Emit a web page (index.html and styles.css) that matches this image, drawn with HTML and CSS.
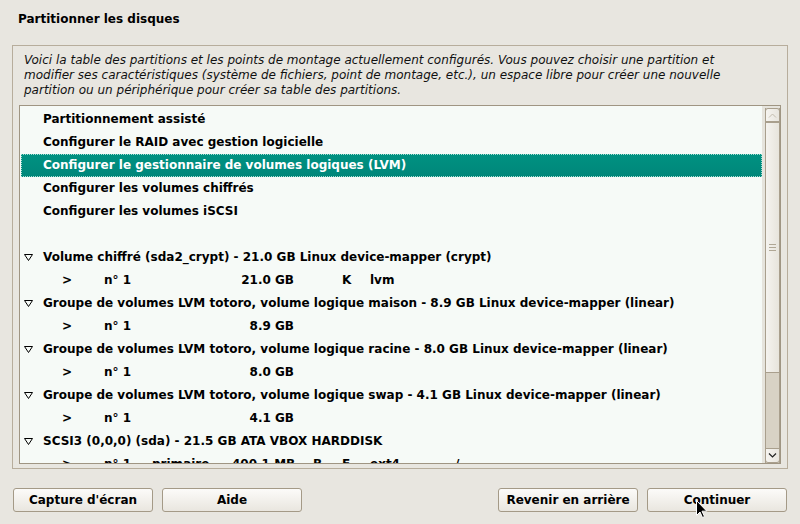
FILE: index.html
```html
<!DOCTYPE html>
<html lang="fr">
<head>
<meta charset="utf-8">
<title>Partitionner les disques</title>
<link rel="stylesheet" href="styles.css">
</head>
<body>
<h1 class="title">Partitionner les disques</h1>
<div class="frame">
  <p class="desc">Voici la table des partitions et les points de montage actuellement configurés. Vous pouvez choisir une partition et modifier ses caractéristiques (système de fichiers, point de montage, etc.), un espace libre pour créer une nouvelle partition ou un périphérique pour créer sa table des partitions.</p>
  <div class="listbox">
    <div class="rows">
      <div class="row"><span class="tw"></span>Partitionnement assisté</div>
      <div class="row"><span class="tw"></span>Configurer le RAID avec gestion logicielle</div>
      <div class="row selected"><span class="tw"></span>Configurer le gestionnaire de volumes logiques (LVM)</div>
      <div class="row"><span class="tw"></span>Configurer les volumes chiffrés</div>
      <div class="row"><span class="tw"></span>Configurer les volumes iSCSI</div>
      <div class="row"></div>
      <div class="row"><span class="tw"><svg class="tri" width="9" height="7" viewBox="0 0 9 7"><path d="M0.5 0.5 H8.5 L4.5 6.5 Z" fill="none" stroke="#000" stroke-width="1"/></svg></span>Volume chiffré (sda2_crypt) - 21.0 GB Linux device-mapper (crypt)</div>
      <div class="row part"><span>&gt;</span><span>n° 1</span><span></span><span class="size">21.0 GB</span><span></span><span></span><span>K</span><span>lvm</span><span></span></div>
      <div class="row"><span class="tw"><svg class="tri" width="9" height="7" viewBox="0 0 9 7"><path d="M0.5 0.5 H8.5 L4.5 6.5 Z" fill="none" stroke="#000" stroke-width="1"/></svg></span>Groupe de volumes LVM totoro, volume logique maison - 8.9 GB Linux device-mapper (linear)</div>
      <div class="row part"><span>&gt;</span><span>n° 1</span><span></span><span class="size">8.9 GB</span><span></span><span></span><span></span><span></span><span></span></div>
      <div class="row"><span class="tw"><svg class="tri" width="9" height="7" viewBox="0 0 9 7"><path d="M0.5 0.5 H8.5 L4.5 6.5 Z" fill="none" stroke="#000" stroke-width="1"/></svg></span>Groupe de volumes LVM totoro, volume logique racine - 8.0 GB Linux device-mapper (linear)</div>
      <div class="row part"><span>&gt;</span><span>n° 1</span><span></span><span class="size">8.0 GB</span><span></span><span></span><span></span><span></span><span></span></div>
      <div class="row"><span class="tw"><svg class="tri" width="9" height="7" viewBox="0 0 9 7"><path d="M0.5 0.5 H8.5 L4.5 6.5 Z" fill="none" stroke="#000" stroke-width="1"/></svg></span>Groupe de volumes LVM totoro, volume logique swap - 4.1 GB Linux device-mapper (linear)</div>
      <div class="row part"><span>&gt;</span><span>n° 1</span><span></span><span class="size">4.1 GB</span><span></span><span></span><span></span><span></span><span></span></div>
      <div class="row"><span class="tw"><svg class="tri" width="9" height="7" viewBox="0 0 9 7"><path d="M0.5 0.5 H8.5 L4.5 6.5 Z" fill="none" stroke="#000" stroke-width="1"/></svg></span>SCSI3 (0,0,0) (sda) - 21.5 GB ATA VBOX HARDDISK</div>
      <div class="row part"><span>&gt;</span><span>n° 1</span><span>primaire</span><span class="size">400.1 MB</span><span></span><span>B</span><span>F</span><span>ext4</span><span>/</span></div>
      <div class="row part"><span>&gt;</span><span>n° 2</span><span>primaire</span><span class="size">21.0 GB</span><span></span><span></span><span>K</span><span>chiffré</span><span></span></div>
    </div>
    <div class="scroll">
      <div class="sb">
        <div class="sb-btn up"><svg width="9" height="5" viewBox="0 0 9 5"><path d="M1 4.5 L4.5 1 L8 4.5" fill="none" stroke="#c3bcae" stroke-width="1"/></svg></div>
        <div class="thumb"><span class="grip"></span><span class="grip"></span><span class="grip"></span></div>
        <div class="trough"></div>
        <div class="sb-btn down"><svg width="9" height="5" viewBox="0 0 9 5"><path d="M1 0.5 L4.5 4 L8 0.5" fill="none" stroke="#222" stroke-width="1.2"/></svg></div>
      </div>
    </div>
  </div>
</div>
<div class="footer">
  <div class="group">
    <button class="btn">Capture d'écran</button>
    <button class="btn">Aide</button>
  </div>
  <div class="group">
    <button class="btn">Revenir en arrière</button>
    <button class="btn">Continuer</button>
  </div>
</div>
<svg class="cursor" width="12" height="19" viewBox="0 0 12 19"><path d="M0.5 0.5 L0.5 15.5 L4 12 L6.5 17.5 L8.5 16.5 L6 11.2 L10.8 11.2 Z" fill="#000" stroke="#fff" stroke-width="1"/></svg>
</body>
</html>
```

FILE: styles.css
```css
* { box-sizing: border-box; }
html, body { margin: 0; padding: 0; }
body {
  width: 800px;
  height: 524px;
  overflow: hidden;
  position: relative;
  background: #e8e6e0;
  font-family: "DejaVu Sans", "Liberation Sans", sans-serif;
  color: #000;
}
.title {
  margin: 0;
  height: 45px;
  padding: 12px 0 0 18px;
  font-size: 12px;
  line-height: 14px;
  font-weight: bold;
}
.frame {
  margin: 0 12px;
  height: 424px;
  border: 1px solid #b7ad9c;
  padding: 7px 6px 4px 6px;
  display: flex;
  flex-direction: column;
}
.desc {
  margin: 0 0 7px 0;
  padding: 0 41px 0 5px;
  font-size: 12px;
  line-height: 15px;
  font-style: italic;
  color: #111;
}
.listbox {
  flex: 1;
  min-height: 0;
  border: 1px solid #9f9583;
  background: #f6faf7;
  display: flex;
}
.rows {
  flex: 1;
  overflow: hidden;
  padding: 2px 0 0 1px;
}
.row {
  height: 23px;
  line-height: 23px;
  font-size: 12px;
  font-weight: bold;
  white-space: nowrap;
  display: flex;
  align-items: center;
}
.tw {
  width: 22px;
  flex: none;
  display: flex;
  align-items: center;
  padding-left: 3px;
}
.tri { display: block; }
.row.selected {
  background: linear-gradient(#009281, #00867a);
  color: #fff;
  outline: 1px dotted #a6ddd2;
  outline-offset: -1px;
}
.row.part {
  display: grid;
  grid-template-columns: 42px 48px 80px 62px 19px 29px 28px 85px auto;
  padding-left: 41px;
}
.row.part .size { text-align: right; }
.scroll {
  width: 18px;
  flex: none;
  background: #e6e4dd;
  padding: 2px 0 0 3px;
  display: flex;
}
.sb {
  flex: 1;
  display: flex;
  flex-direction: column;
  background: #d8d2c5;
  border-left: 1px solid #a99f8d;
  border-right: 1px solid #a99f8d;
}
.sb-btn {
  height: 15px;
  flex: none;
  background: linear-gradient(to right, #f6f4f0, #e8e5de);
  border: 1px solid #a99f8d;
  margin: 0 -1px;
  display: flex;
  align-items: center;
  justify-content: center;
}
.sb-btn.up { height: 14px; border-radius: 3px 3px 0 0; }
.sb-btn.down { border-radius: 0 0 3px 3px; }
.thumb {
  height: 251px;
  flex: none;
  background: linear-gradient(to right, #f5f3ef, #e7e4dc);
  border-top: 1px solid #a99f8d;
  border-bottom: 1px solid #a99f8d;
  display: flex;
  flex-direction: column;
  align-items: center;
  justify-content: center;
  gap: 2px;
}
.grip {
  display: block;
  width: 7px;
  height: 1px;
  background: #b0a795;
}
.trough { flex: 1; }
.footer {
  display: flex;
  justify-content: space-between;
  padding: 19px 13px 0 13px;
}
.group { display: flex; gap: 9px; }
.btn {
  width: 140px;
  height: 24px;
  margin: 0;
  padding: 0;
  border: 1px solid #a49a87;
  border-radius: 3px;
  background: linear-gradient(#fcfbf9, #e9e6df);
  font-family: "DejaVu Sans", "Liberation Sans", sans-serif;
  font-size: 12px;
  font-weight: bold;
  color: #000;
}
.cursor {
  position: absolute;
  left: 696px;
  top: 500px;
}
```
